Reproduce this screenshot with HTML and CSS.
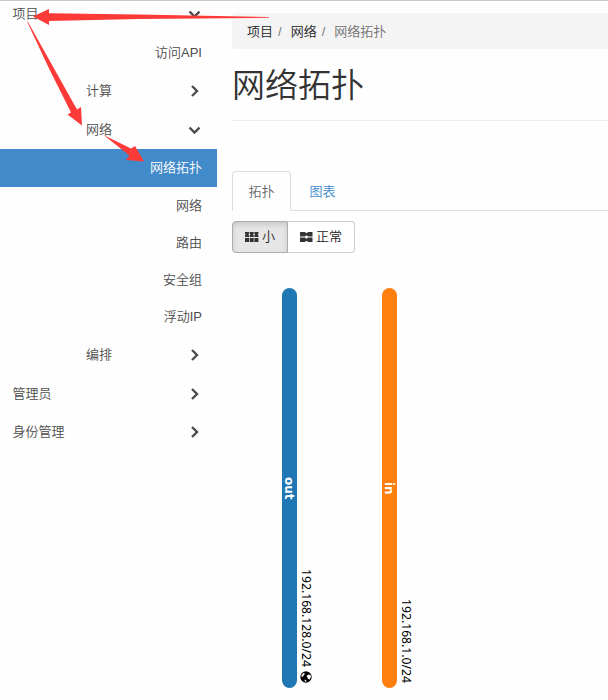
FILE: index.html
```html
<!DOCTYPE html>
<html lang="zh-CN">
<head>
<meta charset="utf-8">
<title>网络拓扑</title>
<link rel="stylesheet" href="styles.css">
</head>
<body>
<svg width="0" height="0" class="defs" aria-hidden="true">
  <symbol id="right" viewBox="0 0 12 12"><path d="M4 1l5 5-5 5" fill="none" stroke="currentColor" stroke-width="2.400"/></symbol>
  <symbol id="down" viewBox="0 0 12 12"><path d="M1.500 3.500l5 5 5-5" fill="none" stroke="currentColor" stroke-width="2.400"/></symbol>
</svg>
<div class="app">
  <nav class="sidebar">
    <a class="row group first"><span>项目</span><svg class="chev"><use href="#down"/></svg></a>
    <a class="row leaf">访问API</a>
    <a class="row group sub"><span>计算</span><svg class="chev"><use href="#right"/></svg></a>
    <a class="row group sub"><span>网络</span><svg class="chev"><use href="#down"/></svg></a>
    <a class="row leaf active">网络拓扑</a>
    <a class="row leaf">网络</a>
    <a class="row leaf">路由</a>
    <a class="row leaf">安全组</a>
    <a class="row leaf">浮动IP</a>
    <a class="row group sub"><span>编排</span><svg class="chev"><use href="#right"/></svg></a>
    <a class="row group"><span>管理员</span><svg class="chev"><use href="#right"/></svg></a>
    <a class="row group last"><span>身份管理</span><svg class="chev"><use href="#right"/></svg></a>
  </nav>
  <main class="content">
    <div class="breadcrumb"><span>项目</span><i>/</i><span>网络</span><i>/</i><span class="current">网络拓扑</span></div>
    <h1>网络拓扑</h1>
    <div class="tabs"><a class="tab selected">拓扑</a><a class="tab">图表</a></div>
    <div class="btn-group">
      <button class="btn pressed"><svg width="14" height="12" viewBox="0 0 14 12"><path d="M0 1h4v2h-.5v1H4v2H0V4h.5V3H0zM4.700 1h4v2h-.5v1h.5v2h-4V4h.5V3h-.5zM9.400 1h4v2h-.5v1h.5v2h-4V4h.5V3h-.5zM0 7h4v4H0zM4.700 7h4v4h-4zM9.400 7h4v4h-4z" fill="#333"/></svg>小</button>
      <button class="btn"><svg width="13" height="12" viewBox="0 0 13 12"><path d="M0 1h5l1 1h1l1-1h4.500v4.600H8l-1-1H6l-1 1H0zM0 6.400h5l1 1h1l1-1h4.500V11H8l-1-1H6l-1 1H0z" fill="#333"/></svg>正常</button>
    </div>
    <div class="topology">
      <div class="network"><div class="bar out">out</div><div class="cidr"><span>192.168.128.0/24</span><svg width="12" height="12" viewBox="0 0 12 12"><circle cx="6" cy="6" r="5.700" fill="#000"/><path d="M1.500 4l2-2 1.500.5-1 1.500-1 1.500-1.500.5zM6.500 5l2-1.500L10.500 4l.5 2-1.500 2.500-1.500-.5-.5-1.500zM4.500 8.500l1.500.5.5 1.500-1.500.3z" fill="#fff"/></svg></div></div>
      <div class="network"><div class="bar in">in</div><div class="cidr"><span>192.168.1.0/24</span></div></div>
    </div>
  </main>
</div>
<svg class="arrows" width="608" height="700" viewBox="0 0 608 700" fill="#fc3b39">
  <path d="M33 16.500L49 9v4.200l90 1.300 130 2.500v.8l-130 1.200-90 2V25z"/>
  <path d="M27 21.500L28 22 77 109.500l4-2.500 1 18.500-14.500-11 3.500-2-22-44z"/>
  <path d="M103.500 135l27.500 13.500 4-2.500 9 15.500-18-1.500 3.500-4.500z"/>
</svg>
</body>
</html>
```
FILE: styles.css
```css
* { box-sizing: border-box; }
body {
  margin: 0;
  height: 700px;
  overflow: hidden;
  background: #fefefe;
  color: #333;
  font: 350 13px/20px "Liberation Sans", "Noto Sans CJK SC", sans-serif;
}
.defs { position: absolute; }
.app { display: flex; height: 700px; border-top: 1px solid #c8c8c8; }
.sidebar { width: 217px; flex: none; color: #4c4c4c; }
.row { display: flex; align-items: center; height: 37px; padding: 0 15px 0 12.5px; }
.group { height: 38px; margin-top: 1px; justify-content: space-between; }
.first { margin-top: -6px; }
.last { margin-top: 0; }
.sub { padding-left: 86px; }
.leaf { justify-content: flex-end; }
.first + .leaf { margin-top: 1px; }
.active { height: 38px; background: #428bca; color: #fff; }
.chev { width: 12px; height: 12px; margin-right: 2px; }
.content { flex: 1; margin-left: 15px; padding-top: 12px; }
.breadcrumb {
  display: flex;
  height: 36px;
  padding: 9px 15px 7px;
  border-radius: 4px 0 0 4px;
  background: #f4f4f4;
  color: #222;
}
.breadcrumb i { padding: 0 9px 0 5px; font-style: normal; color: #777; }
.breadcrumb .current { color: #707070; }
h1 {
  height: 72px;
  margin: 0;
  padding-top: 17px;
  border-bottom: 1px solid #eee;
  font-size: 33px;
  font-weight: 350;
  line-height: 40px;
}
.tabs { display: flex; height: 40px; margin-top: 50px; border-bottom: 1px solid #ddd; }
.tab { height: 40px; padding: 10px 15.5px; border: 1px solid transparent; color: #428bca; margin-right: 2px; }
.selected {
  border-color: #ddd #ddd #fefefe;
  border-radius: 4px 4px 0 0;
  background: #fefefe;
  color: #666;
}
.btn-group { display: flex; margin-top: 10px; }
.btn {
  display: flex;
  align-items: center;
  gap: 3px;
  width: 67px;
  height: 32px;
  padding: 0 12px;
  border: 1px solid #ccc;
  border-left: 0;
  border-radius: 0 4px 4px 0;
  background: #fff;
  color: #222;
  font: inherit;
  white-space: nowrap;
}
.btn svg { flex: none; }
.pressed {
  width: 56px;
  border: 1px solid #adadad;
  border-radius: 4px 0 0 4px;
  background: #e6e6e6;
  box-shadow: inset 0 3px 5px rgba(0, 0, 0, .125);
}
.topology { display: flex; margin: 35px 0 0 50px; }
.network { display: flex; width: 100px; height: 400px; }
.bar {
  width: 15px;
  border-radius: 8px;
  color: #fff;
  text-align: center;
  writing-mode: vertical-rl;
  font: bold 12px/15px "DejaVu Sans", sans-serif;
  padding-right: 1px;
}
.out { background: #1f77b4; }
.in { background: #ff7f0e; }
.cidr {
  display: flex;
  align-items: center;
  justify-content: flex-end;
  gap: 4px;
  width: 18px;
  padding-bottom: 5px;
  writing-mode: vertical-rl;
  color: #000;
  font: 12.2px/18px "Noto Sans", sans-serif;
}
.arrows { position: absolute; top: 0; left: 0; }
```
